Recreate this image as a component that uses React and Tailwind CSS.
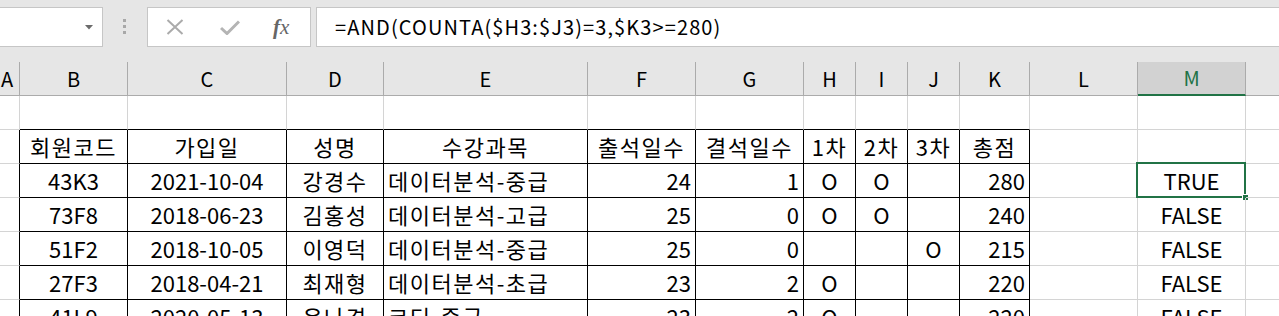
import React from "react";

const FONT = { fontFamily: '"Noto Sans CJK KR", "Noto Sans", sans-serif' };

const COLS = [
  { id: "A", w: "w-[20px]" },
  { id: "B", w: "w-[108px]" },
  { id: "C", w: "w-[159px]" },
  { id: "D", w: "w-[97px]" },
  { id: "E", w: "w-[204px]" },
  { id: "F", w: "w-[108px]" },
  { id: "G", w: "w-[108px]" },
  { id: "H", w: "w-[52px]" },
  { id: "I", w: "w-[52px]" },
  { id: "J", w: "w-[52px]" },
  { id: "K", w: "w-[70px]" },
  { id: "L", w: "w-[108px]" },
  { id: "M", w: "w-[108px]" },
  { id: "N", w: "w-[120px]" },
];

// alignment per column for data rows
const ALIGN = {
  B: "c",
  C: "c",
  D: "c",
  E: "l",
  F: "r",
  G: "r",
  H: "c",
  I: "c",
  J: "c",
  K: "r",
  M: "c",
};

const HEADER = ["회원코드", "가입일", "성명", "수강과목", "출석일수", "결석일수", "1차", "2차", "3차", "총점"];

const ROWS = [
  ["43K3", "2021-10-04", "강경수", "데이터분석-중급", "24", "1", "O", "O", "", "280", "TRUE"],
  ["73F8", "2018-06-23", "김홍성", "데이터분석-고급", "25", "0", "O", "O", "", "240", "FALSE"],
  ["51F2", "2018-10-05", "이영덕", "데이터분석-중급", "25", "0", "", "", "O", "215", "FALSE"],
  ["27F3", "2018-04-21", "최재형", "데이터분석-초급", "23", "2", "O", "", "", "220", "FALSE"],
  ["41L9", "2020-05-13", "윤나경", "코딩-중급", "23", "2", "O", "", "", "220", "FALSE"],
];

const TABLE_COLS = ["B", "C", "D", "E", "F", "G", "H", "I", "J", "K"];

const hasHangul = (s) => typeof s === "string" && /[\uac00-\ud7a3]/.test(s);

function alignClass(a) {
  if (a === "l") return "justify-start pl-[4px]";
  if (a === "r") return "justify-end pr-[4px]";
  return "justify-center";
}

function Cell({ col, row, children, align = "c", selected }) {
  const inTable = TABLE_COLS.includes(col.id);
  const tableRow = row >= 2;
  const rightBlack = tableRow && (inTable || col.id === "A");
  const bottomBlack = inTable && row >= 1;
  return (
    <div
      className={`relative flex h-[34px] shrink-0 items-center whitespace-nowrap border-r border-b pb-[1px] ${col.w} ${
        rightBlack ? "border-r-black" : "border-r-[#d4d4d4]"
      } ${bottomBlack ? "border-b-black" : "border-b-[#d4d4d4]"} ${alignClass(align)}`}
    >
      <span className={hasHangul(children) ? "tracking-[1.5px]" : ""}>{children}</span>
      {selected && (
        <>
          <div className="pointer-events-none absolute -left-[2px] -top-[2px] h-[36px] w-[110px] border-2 border-[#217346]" />
          <div className="absolute -right-[4px] -bottom-[4px] h-[7px] w-[7px] border border-white bg-[#217346]" />
        </>
      )}
    </div>
  );
}

function Toolbar() {
  return (
    <div className="flex h-[62px] items-start bg-[#e6e6e6]">
      <div className="ml-[-1px] mt-[7px] flex h-[40px] w-[104px] shrink-0 items-center justify-end border border-[#c6c6c6] bg-white pr-[9px]">
        <svg width="8" height="5" viewBox="0 0 8 5">
          <path d="M0 0h8L4 4.5z" fill="#6b6b6b" />
        </svg>
      </div>
      <div className="ml-[20px] mt-[19px] flex w-[4px] shrink-0 flex-col gap-[3px]">
        <div className="h-[3px] w-[3px] bg-[#a8a8a8]" />
        <div className="h-[3px] w-[3px] bg-[#a8a8a8]" />
        <div className="h-[3px] w-[3px] bg-[#a8a8a8]" />
      </div>
      <div className="ml-[20px] mt-[7px] flex h-[40px] w-[164px] shrink-0 items-center border border-[#c6c6c6] bg-white">
        <svg className="ml-[18px]" width="18" height="16" viewBox="0 0 18 16">
          <path d="M1.5 1L16.5 15M16.5 1L1.5 15" stroke="#ababab" strokeWidth="2" />
        </svg>
        <svg className="ml-[36px]" width="20" height="15" viewBox="0 0 20 15">
          <path d="M1 8L7 13.5L19 1.5" stroke="#b4b4b4" strokeWidth="3" fill="none" />
        </svg>
        <span
          className="ml-[33px] text-[21px] italic leading-none text-[#666]"
          style={{ fontFamily: '"Liberation Serif", "DejaVu Serif", serif' }}
        >
          <span className="font-bold">f</span>x
        </span>
      </div>
      <div className="ml-[5px] mt-[7px] flex h-[40px] min-w-0 flex-1 items-center border border-r-0 border-[#c6c6c6] bg-white pl-[18px] pb-[1px]">
        <span className="whitespace-nowrap text-[20px] leading-none tracking-[1.1px] text-black">
          =AND(COUNTA($H3:$J3)=3,$K3&gt;=280)
        </span>
      </div>
    </div>
  );
}

function ColumnHeaders() {
  return (
    <div className="flex h-[34px] bg-[#e6e6e6]">
      {COLS.map((c) => {
        const active = c.id === "M";
        return (
          <div
            key={c.id}
            className={`flex shrink-0 items-center border-r border-r-[#ababab] text-[20px] ${c.w} ${
              active
                ? "border-b-2 border-b-[#217346] bg-[#d2d2d2] text-[#217346]"
                : "border-b border-b-[#ababab] text-black"
            } ${c.id === "A" ? "justify-start pl-[1px]" : "justify-center"}`}
          >
            {c.id}
          </div>
        );
      })}
    </div>
  );
}

export default function App() {
  return (
    <div className="h-[316px] w-[1279px] overflow-hidden bg-white" style={FONT}>
      <Toolbar />
      <ColumnHeaders />
      <div className="text-[22px] leading-none text-black">
        {/* row 1: empty */}
        <div className="flex">
          {COLS.map((c) => (
            <Cell key={c.id} col={c} row={1} />
          ))}
        </div>
        {/* row 2: table header */}
        <div className="flex">
          {COLS.map((c) => {
            const i = TABLE_COLS.indexOf(c.id);
            return (
              <Cell key={c.id} col={c} row={2}>
                {i >= 0 ? HEADER[i] : ""}
              </Cell>
            );
          })}
        </div>
        {ROWS.map((r, ri) => (
          <div className="flex" key={ri}>
            {COLS.map((c) => {
              const i = TABLE_COLS.indexOf(c.id);
              let val = "";
              if (i >= 0) val = r[i];
              if (c.id === "M") val = r[10];
              return (
                <Cell key={c.id} col={c} row={ri + 3} align={ALIGN[c.id]} selected={c.id === "M" && ri === 0}>
                  {val}
                </Cell>
              );
            })}
          </div>
        ))}
      </div>
    </div>
  );
}
